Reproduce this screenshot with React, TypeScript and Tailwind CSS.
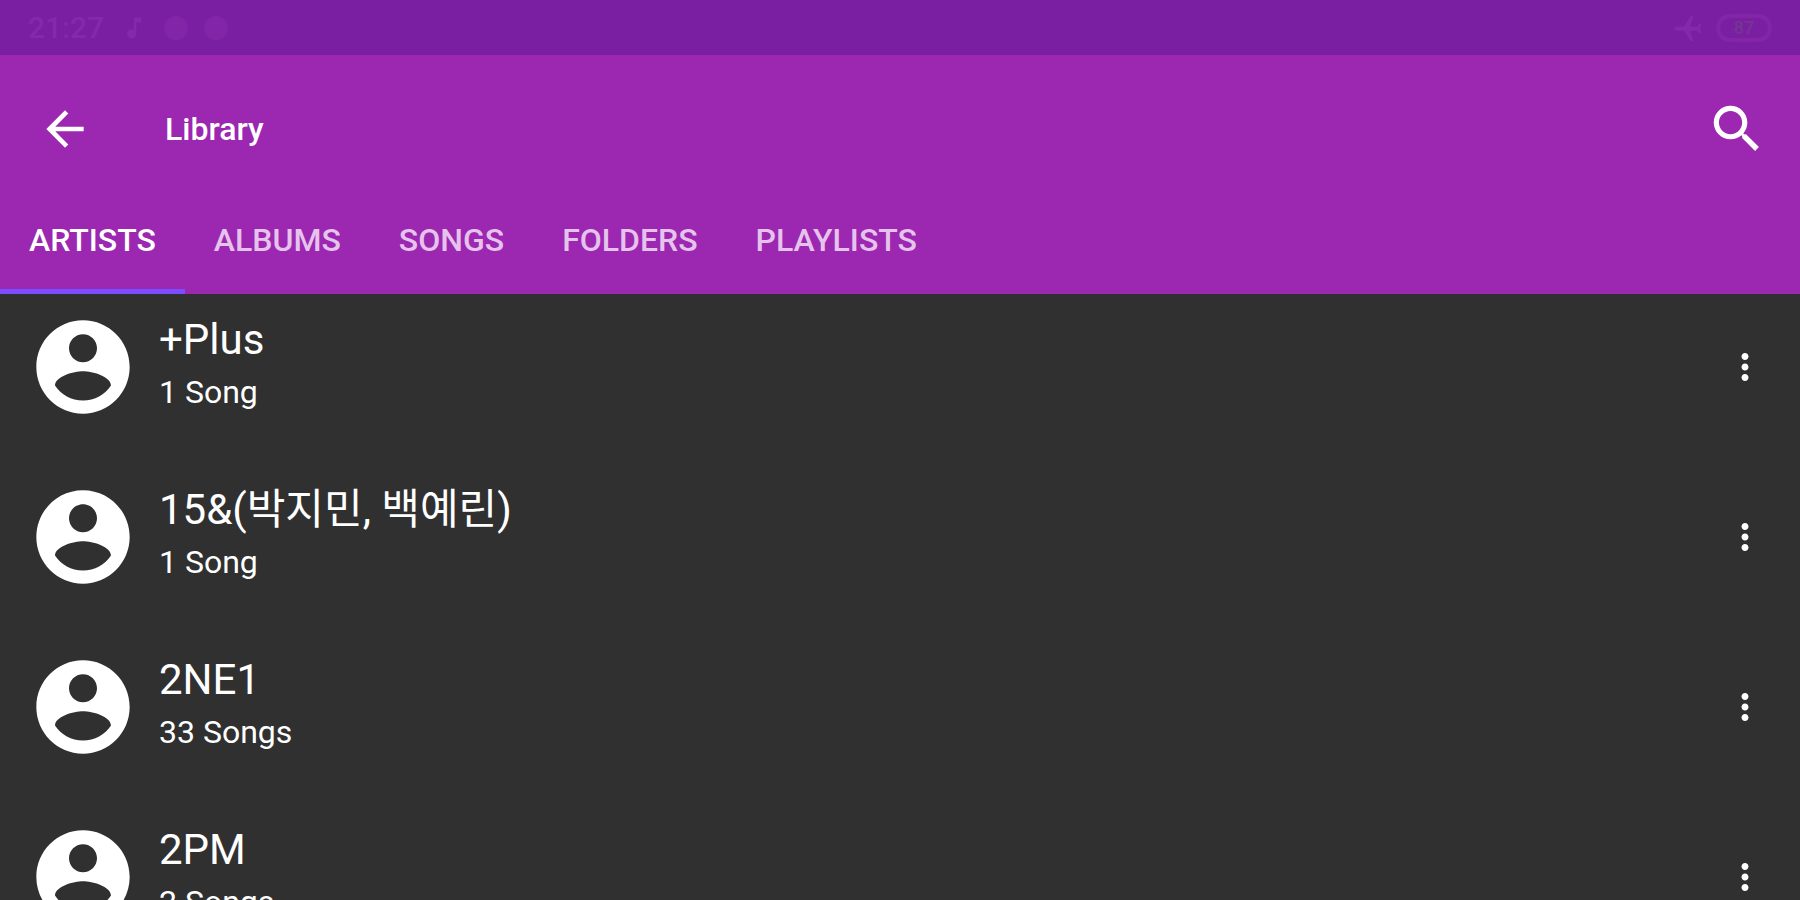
import { useState } from "react";

const tabs = ["Artists", "Albums", "Songs", "Folders", "Playlists"];

const artists = [
  { name: "+Plus", songs: 1 },
  { name: "15&(박지민, 백예린)", songs: 1 },
  { name: "2NE1", songs: 33 },
  { name: "2PM", songs: 2 },
];

function Icon({ d, className }: { d: string; className: string }) {
  return (
    <svg viewBox="0 0 24 24" fill="currentColor" className={className} aria-hidden="true">
      <path d={d} />
    </svg>
  );
}

const icons = {
  back: "M20 11H7.83l5.59-5.59L12 4l-8 8 8 8 1.41-1.41L7.83 13H20v-2z",
  search:
    "M15.5 14h-.79l-.28-.27C15.41 12.59 16 11.11 16 9.5 16 5.91 13.09 3 9.5 3S3 5.91 3 9.5 5.91 16 9.5 16c1.61 0 3.09-.59 4.23-1.57l.27.28v.79l5 4.99L20.49 19l-4.99-5zm-6 0C7.01 14 5 11.99 5 9.5S7.01 5 9.5 5 14 7.01 14 9.5 11.99 14 9.5 14z",
  more: "M12 8c1.1 0 2-.9 2-2s-.9-2-2-2-2 .9-2 2 .9 2 2 2zm0 2c-1.1 0-2 .9-2 2s.9 2 2 2 2-.9 2-2-.9-2-2-2zm0 6c-1.1 0-2 .9-2 2s.9 2 2 2 2-.9 2-2-.9-2-2-2z",
  account:
    "M12 2C6.48 2 2 6.48 2 12s4.48 10 10 10 10-4.48 10-10S17.52 2 12 2zm0 3c1.66 0 3 1.34 3 3s-1.34 3-3 3-3-1.34-3-3 1.34-3 3-3zm0 14.2c-2.5 0-4.71-1.28-6-3.22.03-1.99 4-3.08 6-3.08 1.99 0 5.97 1.09 6 3.08-1.29 1.94-3.5 3.22-6 3.22z",
  plane:
    "M21 16v-2l-8-5V3.5c0-.83-.67-1.5-1.5-1.5S10 2.67 10 3.5V9l-8 5v2l8-2.5V19l-2 1.5V22l3.5-1 3.5 1v-1.5L13 19v-5.5l8 2.5z",
  note: "M12 3v10.55c-.59-.34-1.27-.55-2-.55-2.21 0-4 1.79-4 4s1.79 4 4 4 4-1.79 4-4V7h4V3h-6z",
};

function StatusBar() {
  return (
    <div className="flex h-[55px] items-center justify-between bg-[#7b1fa2] px-7 text-[#8628aa]">
      <div className="flex items-center">
        <span className="text-[30px] leading-none font-medium">21:27</span>
        <Icon d={icons.note} className="ml-4 size-7" />
        <span className="ml-4 size-6 rounded-full bg-[#8225a7]" />
        <span className="ml-4 size-6 rounded-full bg-[#8225a7]" />
      </div>
      <div className="flex items-center gap-3">
        <Icon d={icons.plane} className="size-8 -rotate-90" />
        <span className="flex h-7 w-14 items-center justify-center rounded-full border-4 border-[#8225a7] text-lg leading-none font-bold text-[#743494]">
          87
        </span>
      </div>
    </div>
  );
}

export default function App() {
  const [active, setActive] = useState("Artists");

  return (
    <div className="h-screen overflow-hidden bg-[#303030] font-['Roboto','Noto_Sans_CJK_KR',sans-serif] text-white">
      <StatusBar />

      <header className="bg-[#9c27b0] pt-4">
        <div className="flex h-[116px] items-center pr-8 pl-[37px]">
          <button aria-label="Back">
            <Icon d={icons.back} className="size-14" />
          </button>
          <h1 className="ml-[72px] text-[32px] leading-none font-medium">Library</h1>
          <button aria-label="Search" className="ml-auto">
            <Icon d={icons.search} className="size-[62px]" />
          </button>
        </div>

        <nav role="tablist" className="flex h-[107px]">
          {tabs.map((tab) => (
            <button
              key={tab}
              role="tab"
              aria-selected={tab === active}
              onClick={() => setActive(tab)}
              className={`border-b-[5px] px-[29px] pt-[3px] text-[32px] leading-none font-medium uppercase ${
                tab === active ? "border-b-[#7c4dff] text-white" : "border-b-transparent text-[#e6c3ec]"
              }`}
            >
              {tab}
            </button>
          ))}
        </nav>
      </header>

      <ul className="pt-[17px]">
        {artists.map(({ name, songs }) => (
          <li key={name} className="flex h-[170px] items-start pr-[34px] pl-[27px]">
            <div className="flex h-28 flex-1 items-center">
              <Icon d={icons.account} className="size-28" />
              <div className="ml-5">
                <p className="text-[42px] leading-[50px]">{name}</p>
                <p className="text-[32px] leading-[54px]">
                  {songs} {songs === 1 ? "Song" : "Songs"}
                </p>
              </div>
              <button aria-label={`More options for ${name}`} className="ml-auto">
                <Icon d={icons.more} className="size-[42px]" />
              </button>
            </div>
          </li>
        ))}
      </ul>
    </div>
  );
}
